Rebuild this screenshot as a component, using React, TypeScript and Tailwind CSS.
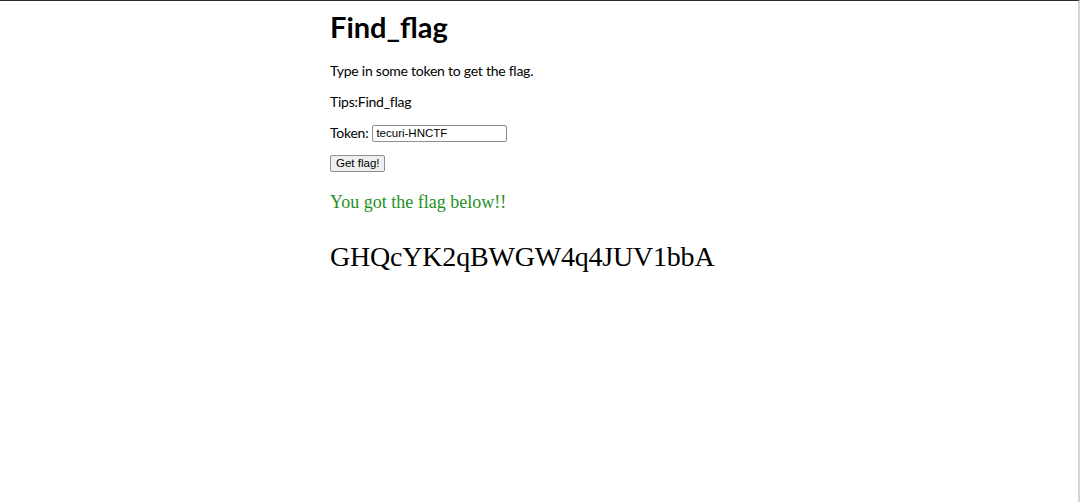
export default function App() {
  return (
    <div className="min-h-[502px] w-full border-t border-t-[#2f2a2c] border-r-2 border-r-[#d4d4d4] bg-white">
      <div className="mx-auto w-[418px] pt-[6px] font-['Lato','Noto_Sans',sans-serif] text-[14px] tracking-[-0.25px] text-black">
        <h1 className="text-[29px] font-bold leading-[40px] tracking-normal">Find_flag</h1>
        <p className="mt-[14px] leading-[20px]">Type in some token to get the flag.</p>
        <p className="mt-[11px] leading-[20px]">Tips:Find_flag</p>
        <form className="mt-[11px]" onSubmit={(e) => e.preventDefault()}>
          <label className="flex items-center leading-[20px]">
            Token:
            <input
              type="text"
              defaultValue="tecuri-HNCTF"
              className="ml-[4px] h-[17px] w-[135px] rounded-[2px] border border-[#8f8f8f] px-[3px] font-['Liberation_Sans',sans-serif] text-[11.5px] tracking-normal text-black"
            />
          </label>
          <button
            type="submit"
            className="mt-[12px] block h-[17px] rounded-[2px] border border-[#8f8f8f] bg-[#efefef] px-[5px] font-['Liberation_Sans',sans-serif] text-[11.5px] leading-[15px] tracking-normal text-black"
          >
            Get flag!
          </button>
        </form>
        <p className="mt-[18px] font-['Liberation_Serif',serif] text-[18px] leading-[24px] tracking-normal text-[#1f8f1f]">
          You got the flag below!!
        </p>
        <p className="mt-[25px] font-['Liberation_Serif',serif] text-[28px] leading-[36px] tracking-[-0.2px]">
          GHQcYK2qBWGW4q4JUV1bbA
        </p>
      </div>
    </div>
  );
}
